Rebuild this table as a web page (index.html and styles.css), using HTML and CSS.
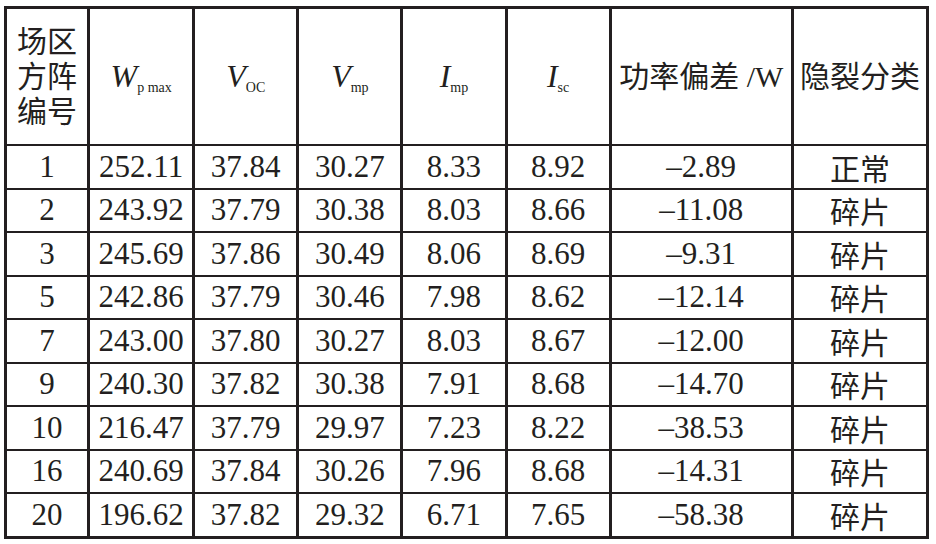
FILE: index.html
```html
<!DOCTYPE html>
<html lang="zh">
<head>
<meta charset="utf-8">
<link rel="stylesheet" href="styles.css">
</head>
<body>
<table class="data">
  <colgroup>
    <col class="c-id"><col class="c-w"><col class="c-n"><col class="c-n"><col class="c-n"><col class="c-n"><col class="c-dev"><col class="c-cls">
  </colgroup>
  <thead>
    <tr class="head">
      <th class="cn">场区<br>方阵<br>编号</th>
      <th><i>W</i><sub>p max</sub></th>
      <th><i>V</i><sub>OC</sub></th>
      <th><i>V</i><sub>mp</sub></th>
      <th><i>I</i><sub>mp</sub></th>
      <th><i>I</i><sub>sc</sub></th>
      <th class="cn">功率偏差 /W</th>
      <th class="cn">隐裂分类</th>
    </tr>
  </thead>
  <tbody>
    <tr><td>1</td><td>252.11</td><td>37.84</td><td>30.27</td><td>8.33</td><td>8.92</td><td>–2.89</td><td class="cn">正常</td></tr>
    <tr><td>2</td><td>243.92</td><td>37.79</td><td>30.38</td><td>8.03</td><td>8.66</td><td>–11.08</td><td class="cn">碎片</td></tr>
    <tr><td>3</td><td>245.69</td><td>37.86</td><td>30.49</td><td>8.06</td><td>8.69</td><td>–9.31</td><td class="cn">碎片</td></tr>
    <tr><td>5</td><td>242.86</td><td>37.79</td><td>30.46</td><td>7.98</td><td>8.62</td><td>–12.14</td><td class="cn">碎片</td></tr>
    <tr><td>7</td><td>243.00</td><td>37.80</td><td>30.27</td><td>8.03</td><td>8.67</td><td>–12.00</td><td class="cn">碎片</td></tr>
    <tr><td>9</td><td>240.30</td><td>37.82</td><td>30.38</td><td>7.91</td><td>8.68</td><td>–14.70</td><td class="cn">碎片</td></tr>
    <tr><td>10</td><td>216.47</td><td>37.79</td><td>29.97</td><td>7.23</td><td>8.22</td><td>–38.53</td><td class="cn">碎片</td></tr>
    <tr><td>16</td><td>240.69</td><td>37.84</td><td>30.26</td><td>7.96</td><td>8.68</td><td>–14.31</td><td class="cn">碎片</td></tr>
    <tr><td>20</td><td>196.62</td><td>37.82</td><td>29.32</td><td>6.71</td><td>7.65</td><td>–58.38</td><td class="cn">碎片</td></tr>
  </tbody>
</table>
</body>
</html>
```

FILE: styles.css
```css
html, body {
  margin: 0;
  padding: 0;
  background: #ffffff;
}
body {
  padding: 6px 0 0 4px;
  font-family: "Liberation Serif", "Noto Sans CJK SC", serif;
  color: #231f20;
}
.data {
  border-collapse: collapse;
  border: 3px solid #231f20;
  table-layout: fixed;
  width: 925px;
}
.c-id { width: 83px; }
.c-w { width: 105px; }
.c-n { width: 104px; }
.c-dev { width: 182px; }
.c-cls { width: 135px; }
.data th,
.data td {
  border-left: 3px solid #231f20;
  border-right: 3px solid #231f20;
  border-top: 2px solid #231f20;
  border-bottom: 2px solid #231f20;
  padding: 0;
  text-align: center;
  vertical-align: middle;
  font-weight: normal;
  font-size: 31px;
  line-height: 34px;
  white-space: nowrap;
}
.data tbody td {
  height: 41.5px;
}
.head th {
  height: 135px;
}
.head th i {
  font-size: 32px;
  font-style: italic;
}
.head th sub {
  font-size: 14px;
  vertical-align: -5px;
  line-height: 0;
}
.head th.cn {
  font-size: 30px;
  line-height: 35px;
}
.cn {
  font-family: "Noto Sans CJK SC", sans-serif;
  font-weight: 300;
}
.head th.cn {
  font-family: "Liberation Serif", "Noto Sans CJK SC", serif;
}
td.cn {
  font-size: 30px;
}
```
